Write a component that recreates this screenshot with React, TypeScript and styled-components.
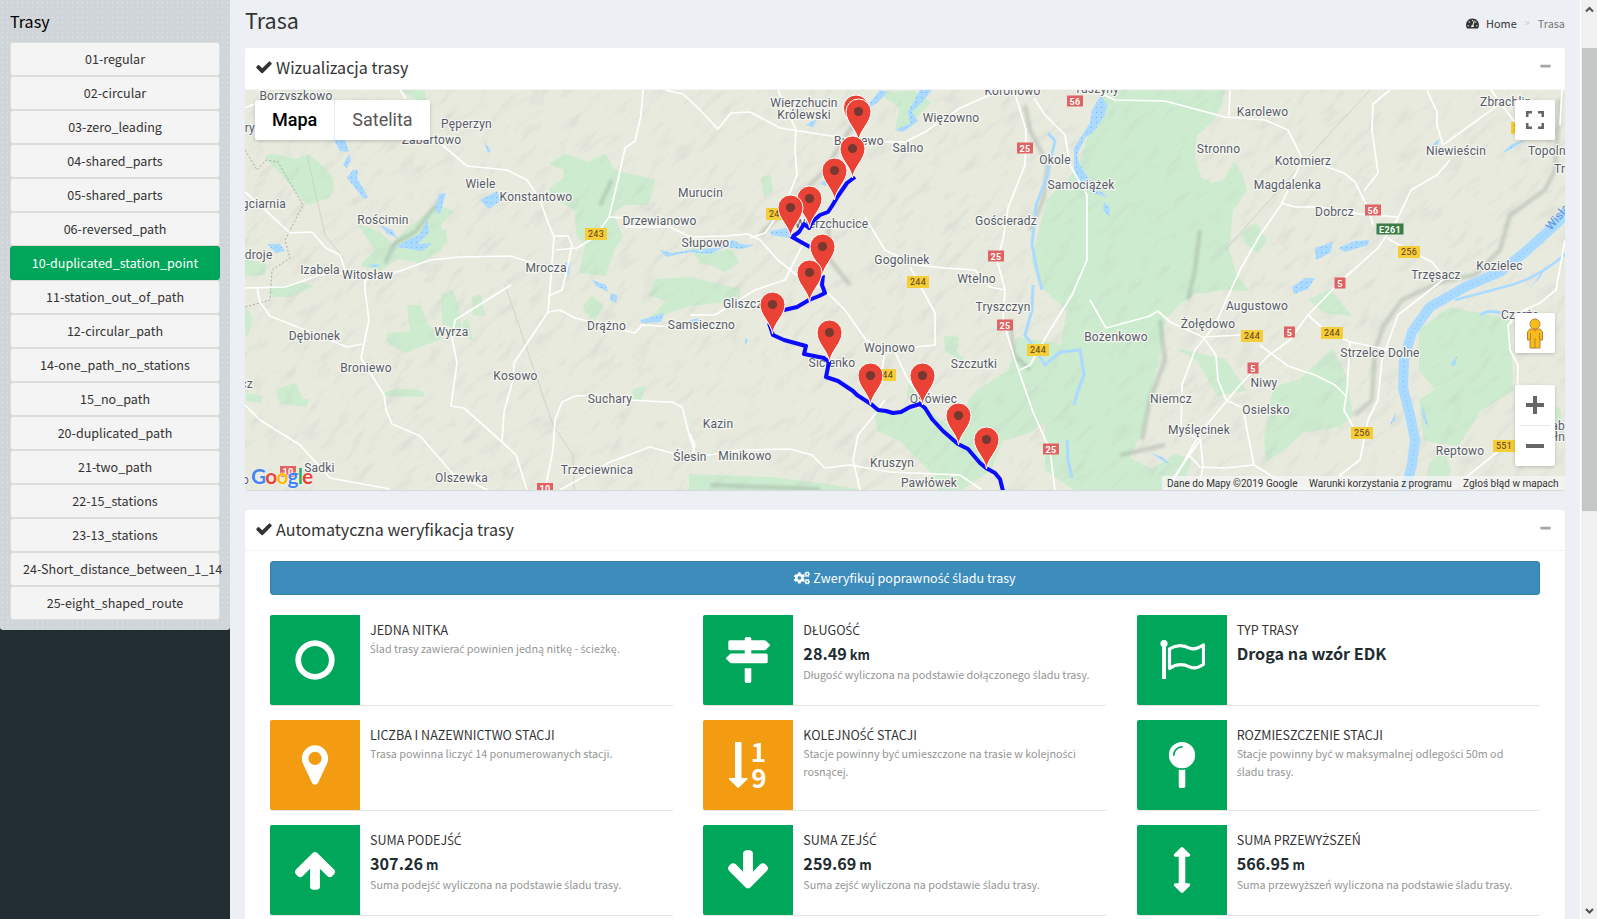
import React from 'react';
import styled, { createGlobalStyle } from 'styled-components';
import { FaCogs, FaTachometerAlt } from 'react-icons/fa';

const GlobalStyle = createGlobalStyle`
  * { box-sizing: border-box; }
  html, body { margin: 0; padding: 0; }
  body {
    overflow: hidden;
    background: #ecf0f4;
    color: #333;
    font-family: "Source Sans Pro", "Noto Sans CJK SC", "Open Sans", sans-serif;
    font-size: 12.55px;
    line-height: 20px;
  }
`;

const green = '#00a65a';
const orange = '#f39c12';

const Page = styled.div`
  display: flex;
  width: 1597px;
  height: 919px;
  overflow: hidden;
`;

const Sidebar = styled.aside`
  flex: 0 0 230px;
  width: 230px;
  min-width: 0;
  background: #222d32;
`;

const RoutePanel = styled.section`
  height: 630px;
  padding: 10px 10px 10px;
  border-radius: 0 0 3px 3px;
  background-color: #d0d5d9;
  background-image: radial-gradient(circle, #dfe9f0 0.6px, transparent 0.9px);
  background-size: 5px 5px;
`;

const PanelTitle = styled.h2`
  margin: 0;
  height: 32px;
  font-size: 16.1px;
  font-weight: 400;
  line-height: 22px;
  color: #000;
`;

const RouteList = styled.nav`
  display: grid;
  grid-template-columns: 210px;
`;

const RouteButton = styled.div<{ $active?: boolean }>`
  height: 34px;
  padding: 0 12px;
  border: 1px solid ${p => (p.$active ? '#04a059' : '#dddddb')};
  border-radius: 3px;
  background: ${p => (p.$active ? green : '#f4f4f4')};
  color: ${p => (p.$active ? '#fff' : '#333')};
  line-height: 31px;
  text-align: center;
  white-space: nowrap;
`;

const Content = styled.main`
  flex: 1 1 0;
  min-width: 0;
  padding: 0 15px;
`;

const ContentHeader = styled.header`
  display: flex;
  align-items: center;
  justify-content: space-between;
  height: 48px;
`;

const PageTitle = styled.h1`
  margin: 0;
  padding-bottom: 9px;
  font-size: 21.5px;
  font-weight: 400;
  line-height: 26px;
`;

const Breadcrumb = styled.div`
  display: flex;
  align-items: center;
  padding-bottom: 2px;
  font-size: 10.9px;
  line-height: 18px;
  color: #777;
`;

const HomeLink = styled.span`
  display: flex;
  align-items: center;
  gap: 7px;
  color: #333;
`;

const Separator = styled.span`
  padding: 0 8px;
  font-size: 9px;
  color: #c4c4c4;
`;

const Box = styled.section`
  margin-bottom: 20px;
  border-radius: 3px;
  background: #fff;
  box-shadow: 0 1px 1px rgba(0, 0, 0, 0.1);
`;

const BoxHeader = styled.header<{ $height: number }>`
  display: flex;
  align-items: center;
  height: ${p => p.$height}px;
  padding: 0 13px 3px 10px;
  border-bottom: 1px solid #f4f4f4;
`;

const BoxTitle = styled.h3`
  flex: 1;
  display: flex;
  align-items: center;
  gap: 3px;
  margin: 0;
  font-size: 16.1px;
  font-weight: 400;
  line-height: 18px;
`;

const Collapse = styled.span`
  display: flex;
  padding-bottom: 1px;
  color: #a3a6aa;
`;

const MapFrame = styled.div`
  position: relative;
  height: 400px;
  overflow: hidden;
  font-family: Roboto, sans-serif;
`;

const MapSvg = styled.svg`
  display: block;
  width: 1320px;
  height: 400px;
`;

const MapTypes = styled.div`
  position: absolute;
  top: 10px;
  left: 10px;
  display: flex;
  height: 40px;
  border-radius: 2px;
  background: #fff;
  box-shadow: 0 1px 4px -1px rgba(0, 0, 0, 0.3);
`;

const MapType = styled.span<{ $selected?: boolean }>`
  padding: 0 17px;
  border-left: ${p => (p.$selected ? '0' : '1px solid #e8e8e8')};
  font-size: 18px;
  line-height: 40px;
  font-weight: ${p => (p.$selected ? 500 : 400)};
  color: ${p => (p.$selected ? '#000' : '#565656')};
`;

const MapControl = styled.div<{ $top: number; $height: number }>`
  position: absolute;
  top: ${p => p.$top}px;
  right: 10px;
  display: flex;
  flex-direction: column;
  align-items: center;
  justify-content: center;
  width: 40px;
  height: ${p => p.$height}px;
  border-radius: 2px;
  background: #fff;
  box-shadow: 0 1px 4px -1px rgba(0, 0, 0, 0.3);
`;

const ZoomGlyphs = styled.div`
  display: flex;
  flex-direction: column;
  align-items: center;
  padding-bottom: 7px;
`;

const ZoomDivider = styled.div`
  width: 30px;
  height: 1px;
  margin: 11px 0 18px;
  background: #e6e6e6;
`;

const Credits = styled.div`
  position: absolute;
  right: 0;
  bottom: 0;
  display: flex;
  gap: 12px;
  height: 14px;
  padding: 0 6px 0 5px;
  background: rgba(245, 245, 245, 0.75);
  font-size: 10px;
  line-height: 15px;
  color: #333;
  white-space: nowrap;
`;

const Credit = styled.span<{ $width: number }>`
  width: ${p => p.$width}px;
`;

const Logo = styled.div`
  position: absolute;
  left: 6px;
  bottom: 1px;
  font-family: Lato, sans-serif;
  font-size: 21px;
  font-weight: 700;
  line-height: 26px;
  letter-spacing: -0.9px;
  text-shadow: 0 0 1px #fff, 0 0 2px #fff;
`;

const LogoLetter = styled.span<{ $color: string }>`
  color: ${p => p.$color};
`;

const BoxBody = styled.div`
  padding: 10px 25px 30px;
`;

const VerifyButton = styled.button`
  display: flex;
  align-items: center;
  justify-content: center;
  gap: 3px;
  width: 100%;
  height: 34px;
  margin: 0 0 20px;
  padding: 0;
  border: 1px solid #367fa9;
  border-radius: 3px;
  background: #3c8dbc;
  color: #fff;
  font: inherit;
`;

const InfoGrid = styled.div`
  display: grid;
  grid-template-columns: repeat(3, 1fr);
  gap: 15px 30px;
`;

const InfoCard = styled.article`
  display: flex;
  height: 90px;
  border-radius: 2px;
  background: #fff;
  box-shadow: 0 1px 0 #e5e6df;
`;

const InfoIcon = styled.div<{ $color: string }>`
  display: flex;
  flex: 0 0 90px;
  align-items: center;
  justify-content: center;
  border-radius: 2px 0 0 2px;
  background: ${p => p.$color};
  color: #fff;
`;

const InfoText = styled.div`
  flex: 1;
  min-width: 0;
  padding: 5px 10px 0;
`;

const InfoTitle = styled.div`
  height: 20px;
  line-height: 20px;
  text-transform: uppercase;
`;

const InfoNumber = styled.div`
  height: 26px;
  font-size: 16.2px;
  font-weight: 700;
  line-height: 26px;
  color: #222d32;
`;

const Unit = styled.small`
  font-size: 12.9px;
`;

const InfoNote = styled.div`
  font-size: 10.75px;
  line-height: 18px;
  color: #949694;
`;

const Accented = styled.span`
  font-family: "Open Sans", sans-serif;
  font-size: 0.98em;
  line-height: 1;
`;

const PolishText = ({ children }: { children: string }) => (
  <span>
    {children.split(/([śćżźŚĆŻŹ]+)/).map((part, i) => (i % 2 ? <Accented key={i}>{part}</Accented> : part))}
  </span>
);

const ScrollTrack = styled.div`
  display: flex;
  flex: 0 0 17px;
  flex-direction: column;
  align-items: center;
  border-left: 1px solid #fff;
  background: #eff0ef;
  color: #505050;
`;

const ScrollArrow = styled.svg`
  width: 9px;
  height: 18px;
`;

const ScrollThumb = styled.div`
  width: 15px;
  height: 463px;
  margin: 30px 0 390px;
  background: #c3c8c7;
`;

/* Glyphs on a 1792-unit square */
const glyphs: Record<string, string> = {
  check: 'M1671 566q0 40-28 68l-724 724-136 136q-28 28-68 28t-68-28l-136-136-362-362q-28-28-28-68t28-68l136-136q28-28 68-28t68 28l294 295 656-657q28-28 68-28t68 28l136 136q28 28 28 68z',
  minus: 'M1600 736v192q0 40-28 68t-68 28h-1216q-40 0-68-28t-28-68v-192q0-40 28-68t68-28h1216q40 0 68 28t28 68z',
  circle: 'M896 352q-148 0-273 73t-198 198-73 273 73 273 198 198 273 73 273-73 198-198 73-273-73-273-198-198-273-73zm768 544q0 209-103 385.500t-279.500 279.500-385.500 103-385.500-103-279.500-279.500-103-385.500 103-385.500 279.500-279.500 385.500-103 385.500 103 279.500 279.500 103 385.500z',
  marker: 'M1152 640q0-106-75-181t-181-75-181 75-75 181 75 181 181 75 181-75 75-181zm256 0q0 109-33 179l-364 774q-16 33-47.500 52t-67.500 19-67.500-19-46.500-52l-365-774q-33-70-33-179 0-212 150-362t362-150 362 150 150 362z',
  signs: 'M1745 297q10 10 10 23t-10 23l-141 141q-28 28-68 28h-1344q-26 0-45-19t-19-45v-256q0-26 19-45t45-19h576v-64q0-26 19-45t45-19h128q26 0 45 19t19 45v64h512q40 0 68 28zm-977 919h256v512q0 26-19 45t-45 19h-128q-26 0-45-19t-19-45v-512zm832-576q26 0 45 19t19 45v256q0 26-19 45t-45 19h-1344q-40 0-68-28l-141-141q-10-10-10-23t10-23l141-141q28-28 68-28h512v-192h256v192h576z',
  pin: 'M896 1088q66 0 128-15v655q0 26-19 45t-45 19h-128q-26 0-45-19t-19-45v-655q62 15 128 15zm0-1088q212 0 362 150t150 362-150 362-362 150-362-150-150-362 150-362 362-150zm0 224q14 0 23-9t9-23-9-23-23-9q-146 0-249 103t-103 249q0 14 9 23t23 9 23-9 9-23q0-119 84.500-203.500t203.500-84.500z',
  up: 'M1675 971q0 51-37 90l-75 75q-38 38-91 38-54 0-90-38l-294-293v704q0 52-37.500 84.500t-90.500 32.500h-128q-53 0-90.500-32.500t-37.500-84.500v-704l-294 293q-36 38-90 38t-90-38l-75-75q-38-38-38-90 0-53 38-91l651-651q35-37 90-37 54 0 91 37l651 651q37 39 37 91z',
  down: 'M1675 832q0 53-37 90l-651 652q-39 37-91 37-53 0-90-37l-651-652q-38-36-38-90 0-53 38-91l74-75q39-37 91-37 53 0 90 37l294 294v-704q0-52 38-90t90-38h128q52 0 90 38t38 90v704l294-294q37-37 90-37 52 0 91 37l75 75q37 39 37 91z',
  vertical: 'M1216 320q0 26-19 45t-45 19h-128v1024h128q26 0 45 19t19 45-19 45l-256 256q-19 19-45 19t-45-19l-256-256q-19-19-19-45t19-45 45-19h128v-1024h-128q-26 0-45-19t-19-45 19-45l256-256q19-19 45-19t45 19l256 256q19 19 19 45z',
};

const Glyph = ({ name, size }: { name: string; size: number }) => (
  <svg width={size} height={size} viewBox="0 0 1792 1792" fill="currentColor">
    <path d={glyphs[name]} />
  </svg>
);

const FlagGlyph = () => (
  <svg width="46" height="46" viewBox="0 0 46 46" fill="none" stroke="#fff">
    <circle cx="5" cy="6.500" r="3.600" fill="#fff" stroke="none" />
    <path d="M5 8v34" strokeWidth="4" />
    <path d="M10.500 11.800c7-4.400 13-4.600 20.500-.5 4.500 2 9-.8 13.500-3.300v19.500c-5 3-9 4.800-14 2.400-7-3.500-13-3-20 1.400z" strokeWidth="3.200" strokeLinejoin="round" />
  </svg>
);

const SortGlyph = () => (
  <svg width="45" height="52" viewBox="0 0 45 52" fill="#fff">
    <path d="M9 3h6.500v36h5.500q1.500 0 .5 1.300L13 48.500q-.8.800-1.600 0L3 40.300Q2 39 3.500 39H9z" />
    <text x="32.500" y="22.500" textAnchor="middle" fontSize="26" fontWeight="700" fontFamily='"Noto Sans CJK SC", sans-serif'>1</text>
    <text x="33" y="48.500" textAnchor="middle" fontSize="26" fontWeight="700" fontFamily='"Noto Sans CJK SC", sans-serif'>9</text>
  </svg>
);

const routes = [
  '01-regular', '02-circular', '03-zero_leading', '04-shared_parts', '05-shared_parts',
  '06-reversed_path', '10-duplicated_station_point', '11-station_out_of_path',
  '12-circular_path', '14-one_path_no_stations', '15_no_path', '20-duplicated_path',
  '21-two_path', '22-15_stations', '23-13_stations', '24-Short_distance_between_1_14',
  '25-eight_shaped_route',
];

type Check = { title: string; color: string; icon: React.ReactNode; value?: string; unit?: string; note?: string };

const checks: Check[] = [
  { title: 'Jedna nitka', color: green, icon: <Glyph name="circle" size={46} />, note: 'Ślad trasy zawierać powinien jedną nitkę - ścieżkę.' },
  { title: 'Długość', color: green, icon: <Glyph name="signs" size={46} />, value: '28.49', unit: 'km', note: 'Długość wyliczona na podstawie dołączonego śladu trasy.' },
  { title: 'Typ trasy', color: green, icon: <FlagGlyph />, value: 'Droga na wzór EDK' },
  { title: 'Liczba i nazewnictwo stacji', color: orange, icon: <Glyph name="marker" size={46} />, note: 'Trasa powinna liczyć 14 ponumerowanych stacji.' },
  { title: 'Kolejność stacji', color: orange, icon: <SortGlyph />, note: 'Stacje powinny być umieszczone na trasie w kolejności rosnącej.' },
  { title: 'Rozmieszczenie stacji', color: green, icon: <Glyph name="pin" size={46} />, note: 'Stacje powinny być w maksymalnej odlegości 50m od śladu trasy.' },
  { title: 'Suma podejść', color: green, icon: <Glyph name="up" size={46} />, value: '307.26', unit: 'm', note: 'Suma podejść wyliczona na podstawie śladu trasy.' },
  { title: 'Suma zejść', color: green, icon: <Glyph name="down" size={46} />, value: '259.69', unit: 'm', note: 'Suma zejść wyliczona na podstawie śladu trasy.' },
  { title: 'Suma przewyższeń', color: green, icon: <Glyph name="vertical" size={46} />, value: '566.95', unit: 'm', note: 'Suma przewyższeń wyliczona na podstawie śladu trasy.' },
];

type Place = [string, number, number, ('start' | 'end')?];

const places: Place[] = [
  ['Borzyszkowo', 296, 100], ['ary', 255, 132, 'end'], ['Pęperzyn', 466.5, 128], ['Zabartowo', 431.5, 144],
  ['Wiele', 480.5, 188], ['Konstantowo', 536, 201], ['Rościmin', 383, 224], ['gciarnia', 286, 208, 'end'],
  ['Zdroje', 272.5, 259, 'end'], ['Izabela', 320, 274], ['Witosław', 367.5, 279], ['Mrocza', 546, 272],
  ['Drzewianowo', 659.5, 225], ['Murucin', 700.5, 197], ['Słupowo', 705.5, 247], ['Dębionek', 314.5, 340],
  ['Broniewo', 366, 372], ['Wyrza', 451.5, 336], ['Kosowo', 515.5, 380], ['Drążno', 606.5, 330],
  ['Suchary', 610, 403], ['Trzeciewnica', 597, 474], ['Olszewka', 461.5, 482], ['Sadki', 319.5, 472],
  ['cz', 253, 388, 'end'], ['o', 249, 484, 'end'], ['Samsieczno', 701.5, 329], ['Ślesin', 690, 461],
  ['Kazin', 718, 428], ['Minikowo', 745, 460], ['Kruszyn', 892, 467], ['Pawłówek', 929, 487],
  ['Gliszcz', 723, 308, 'start'], ['Sicienko', 832, 367], ['Wojnowo', 889.5, 352], ['Szczutki', 974, 368],
  ['Tryszczyn', 1003, 311], ['Osówiec', 933.5, 403], ['Wierzchucin', 804, 107], ['Królewski', 804, 119],
  ['Buszewo', 859, 145], ['Salno', 908, 152], ['Więzowno', 951, 122], ['Koronowo', 1012.5, 94.5],
  ['Okole', 1055, 164], ['Samociążek', 1081, 189], ['Gościeradz', 1006, 225], ['Wierzchucice', 831.5, 228],
  ['Gogolinek', 902, 264], ['Wtelno', 976.5, 283], ['Bożenkowo', 1116, 341], ['Karolewo', 1262.5, 116],
  ['Stronno', 1218.5, 153], ['Kotomierz', 1303, 165], ['Magdalenka', 1287.5, 189], ['Dobrcz', 1334.5, 216],
  ['Zbrachlin', 1480, 106, 'start'], ['Niewieścin', 1456, 155], ['Topolno', 1528, 155, 'start'],
  ['Tr', 1554, 173, 'start'], ['Kozielec', 1499.5, 270], ['Trzęsacz', 1436, 279], ['Tuszyny', 1119, 92.5, 'end'],
  ['Augustowo', 1257, 310], ['Żołędowo', 1208, 328], ['Niwy', 1264, 387], ['Niemcz', 1171, 403],
  ['Osielsko', 1266, 414], ['Myślęcinek', 1199, 434], ['Strzelce Dolne', 1380, 357], ['Reptowo', 1460, 455],
  ['Czarże', 1501, 319, 'start'], ['ąb', 1565, 430, 'end'], ['ełn', 1565, 441, 'end'],
];

const yellow = '#f5cd37';
const red = '#e06262';

const shields: [string, number, number, string][] = [
  ['243', 596, 234, yellow], ['244', 777, 214, yellow], ['244', 918, 282, yellow], ['244', 885, 375, yellow],
  ['244', 1038, 350, yellow], ['244', 1252, 336, yellow], ['244', 1332, 333, yellow], ['256', 1409, 252, yellow],
  ['256', 1362, 433, yellow], ['551', 1504, 446, yellow], ['256', 1522, 128, yellow],
  ['56', 1075, 101.5, red], ['25', 1025, 148.5, red], ['25', 996, 256.5, red], ['25', 1005, 325.5, red],
  ['25', 1051, 449.5, red], ['56', 1373, 210.5, red], ['5', 1340, 283.5, red], ['5', 1289.5, 332.5, red],
  ['5', 1253, 368.5, red], ['10', 545, 489, red], ['10', 288, 472, red], ['E261', 1390, 229.5, '#3b7d45'],
];

const pins: [number, number][] = [
  [856, 107.5], [858.5, 111.5], [852.5, 148.5], [834.5, 170.5], [809.5, 198.5], [790.5, 207.5], [822.5, 246.5],
  [809.5, 272.5], [772.5, 304.5], [829.5, 332.5], [870.5, 375.5], [922.5, 375.5], [958.5, 415.5], [986.5, 439.5],
];

const forests = [
  'M1103 90L1224 90 1221 105 1213 120 1196 135 1194 155 1200 178 1212 184 1224 181 1234 163 1241 174 1246 190 1232 210 1228 250 1236 276 1247 290 1225 289 1195 293 1180 303 1165 318 1160 350 1150 392 1142 430 1128 458 1152 470 1175 455 1190 460 1182 490 1076 490 1046 470 1046 420 1030 432 1002 440 990 470 960 490 940 490 930 470 900 440 878 430 875 411 895 415 925 408 945 425 962 412 976 392 1010 370 1018 338 1062 345 1068 310 1040 285 1032 260 1048 200 1078 170z',
  'M404 90L424 90 425 101 411 96z',
  'M266 157Q270 153 279 156L295 160 309 155 323 168Q338 180 330 196L309 204 300 196 286 178z',
  'M551 163L566 155 588 163 605 155 614 171 654 180 648 204 625 204 612 213 622 237 613 250 605 275 580 272 586 245 577 235 576 210 550 195 551 188 565 178 564 169z',
  'M359 225L378 232 393 245 400 236 425 215 435 206 452 211 440 225 446 240 440 250 420 262 398 258 380 270 362 265 376 250z',
  'M420 235L445 230 447 242 424 252z M245 260L265 264 264 274 245 275z M270 290L300 283 312 286 290 296 273 296z',
  'M442 295L452 292 458 306 460 328 443 324z M473 297L480 296 484 315 474 314z M408 306L420 306 427 325 443 337 405 352 387 341 388 334 411 332z M467 320L472 340 468 338 463 324z',
  'M584 305L592 297 603 306 595 319 586 312z M384 394Q400 386 423 393L423 396 387 395z M277 390L295 384 302 400 308 400 306 406 280 402z M247 394L262 397 260 402 247 400z',
  'M634 390L645 387 640 400 632 399z M245 308L252 318 247 335z',
  'M656 280L690 278 740 290 737 300 690 305 660 315 645 325 668 300 650 295z M707 255L730 250 738 262 725 271 708 262z',
  'M687 240L703 244 715 258 730 268 700 262z M762 178L770 176 772 190 765 196z M690 282L713 284 713 292 690 302z',
  'M880 93L915 92 930 103 902 130 896 128 901 108 890 100z M945 337L958 338 956 350 946 350z M910 375L920 400 908 398z',
  'M1274 388L1300 380 1332 350 1345 375 1352 415 1340 426 1304 431 1280 452 1267 460 1265 440z',
  'M1420 330L1450 308 1510 320 1512 390 1480 410 1458 445 1425 440 1420 400 1436 390 1420 370z M1525 390L1560 410 1560 430 1530 420z',
  'M1310 300L1330 290 1350 315 1325 312z M1243 233L1256 224 1266 240 1258 252 1248 245z M1180 350L1225 360 1245 390 1218 395 1198 360z',
  'M1430 465L1443 450 1450 470 1440 490 1425 490z',
  'M690 475L770 478 820 484 860 490 690 490z M950 345L965 362 948 352z',
];

const waters = [
  'M334 140L345 140 349 152 340 151z M349 154L351 160 347 168 343 165z M353 170L358 170 357 178 368 197 364 199 347 178z',
  'M480 200L497 191 501 200 489 209z M484 141L491 151 488 153z M439 194L446 193 440 214 435 211z',
  'M380 225L392 230 397 238 388 234z M368 265L382 264 400 244 420 234 427 220 429 232 418 244 433 243 422 251 398 247 384 262 375 268z',
  'M267 244L280 244 285 251 276 253z M565 263L570 262 569 275 564 270z M592 280L606 285 608 292 596 286z M611 293L617 295 616 303 610 300z',
  'M660 250L672 253 690 250 713 248 733 240 740 244 755 245 742 249 725 247 710 254 690 252 666 257z M770 231L792 227 790 238 771 235z',
  'M640 320L655 316 664 313 661 322 642 323z M690 320L699 318 698 325 690 324z M745 338L748 340 745 345z',
  'M880 90L887 92 878 102 862 113 872 100z M805 125L817 119 813 127z M920 90L932 90 924 100 912 112 918 121 903 132 895 130 910 124 908 112z M820 184L834 173 826 186z',
  'M1101 95L1107 105 1105 115 1095 130 1085 138 1077 155 1080 165 1088 178 1098 190 1108 197 1095 194 1080 183 1074 170 1074 148 1090 123 1092 110z',
  'M1315 248L1333 242 1330 253 1316 260z M1338 248L1355 241 1369 240 1368 245 1345 252z M1292 287L1305 278 1315 278 1308 289 1294 294z',
  'M1430 146L1440 139 1437 146z M1502 153L1512 144 1525 140 1510 150z M1104 202L1110 207 1109 217 1103 210z M1450 365L1457 356 1455 366z',
  'M1390 425L1396 411 1395 420z M1422 403L1428 425 1430 430 1423 418z M1540 278L1548 262 1534 283 1528 290z M1152 453L1164 458 1170 465 1160 459z',
];

const rivers = [
  'M1048 133L1055 141 1046 180 1036 205 1032 245 1037 270 1042 290',
  'M1033 285L1032 310 1025 335 1036 350 1045 365 1060 352 1080 350 1084 375 1078 390 1074 405',
  'M1480 315Q1488 309 1502 313',
  'M1067 440L1068 460 1072 478',
];

const roads = [
  'M400 90L406 99 M245 108L254 104 M253 105L290 93',
  'M440 143L467 166 507 170 527 180 540 200 547 220 554 237 553 250 550 290 548 312 514 363 513 380 504 412 502 442',
  'M643 90L641 115 635 141 625 148 618 180 609 217 595 237 577 248 556 250 M554 236L568 236 572 245 568 265 562 290 548 296',
  'M609 217L625 218 M625 227L670 227 690 237 725 236 748 234 760 240 778 260 800 278 825 290 845 310 866 340 885 350 882 370',
  'M665 90L683 94 700 110 718 129 731 113 750 112 780 128 838 137 863 142 905 142 925 132 960 108 992 94 1030 90',
  'M778 90L796 130 795 150 797 175 785 205 765 233 750 238',
  'M805 240L785 280 755 290 715 315 690 315 M245 192L263 208 290 233 312 232 326 248 340 255 345 270 365 280 400 271 430 260 460 257 510 256 530 262 544 270',
  'M245 288L285 287 320 275 350 272 M365 270L365 290 369 320 361 358 384 395 386 410 392 424 420 436 453 474 488 490',
  'M257 288L260 302 270 316 305 330 347 347 362 344 M511 285L455 320 452 338 457 363 451 406 464 408 502 442 516 455 527 490',
  'M548 312L560 310 575 318 600 324 635 333 642 325 675 327',
  'M245 405L260 420 300 445 330 478 390 489 M545 490L553 450 555 420 562 402 575 396 595 395 630 400 665 402 672 402 682 407 690 438 695 452 690 458 650 447 610 462 560 490',
  'M690 434L695 445 691 458 740 450 790 449 812 455 825 468 850 465 890 472 960 475 982 490 M860 490L853 460 858 435 872 418 885 400',
  'M1014 90L1026 130 1025 165 1008 208 1003 240 997 260 1005 290 1003 320 1015 360 1033 412 1050 450 1055 490',
  'M1034 98L1045 115 1065 135 1070 165 1087 195 1087 260 1072 295 1050 330 1030 365 1020 370',
  'M865 217L885 250 915 265 945 268 975 270 990 287 1005 290 M910 267L935 313 935 345 915 347 M895 352L907 378 922 400',
  'M1100 93L1115 100 1165 101 1225 117 1265 120 1288 130 1302 158 1344 173 1355 182 1369 210 1373 225 M1230 90L1229 116',
  'M1302 160L1281 205 1260 235 1240 270 1215 325 1195 350 1182 385 1181 430 1200 440 1165 490',
  'M1281 203L1295 207 1320 207 1360 214 1398 217 M1450 160L1437 175 1411 190 1397 220 1378 248 1340 282 1308 315 1290 340 1268 356 1240 385 1200 433 1175 478 1165 490',
  'M1390 90L1373 104 1372 130 1378 173 1364 191 M1427 90L1437 112 1437 125 1443 145 1505 100 M1491 90L1513 120 1533 137 M1562 90L1560 125',
  'M1387 238L1408 250 1432 262 1445 278 1420 298 1398 315 1382 360 1378 400 1368 420 1360 460 M1360 460L1340 475 1358 490',
  'M1308 315L1325 330 1350 342 1390 350 M1350 342L1347 390 1344 410 1355 430 M1260 345L1288 366 1315 375 1335 385 1346 396',
  'M1188 454L1200 467 1225 468 1254 465 1275 478 1310 490 M1203 337L1216 355 1218 380 1226 400 1243 408 1248 435 1254 465 M1090 300L1106 328 1150 316 1158 311 1170 322 1203 337 1240 335',
  'M1200 435L1203 467 1198 490 M1565 240L1556 290 1540 303 1520 312 1508 325 1510 350 1518 365 1517 400 M1465 478L1500 450',
];

const ridges = [
  'M1560 100L1555 170 1545 190 1510 215 1500 250 1475 275 1440 282 1402 300 1384 325 1375 350 1372 400 1355 415',
  'M1160 320L1165 360 1150 400 1142 440 M1120 455L1165 445 M1200 230L1195 270 1188 300',
  'M860 115L840 145 825 170 760 235 M828 220L830 260 850 285',
  'M1025 105L1030 130 1048 165 1043 200 1030 230 M1010 320L1014 355 1030 370',
  'M385 263L395 243 415 232 440 200 M612 180L600 205 M710 485L820 489',
];

const minorRoads = [
  'M1370 90L1310 155 1225 250', 'M505 285L553 425 573 455 574 490', 'M307 155L325 235 345 260',
];

const MapPicture = () => (
  <MapSvg viewBox="245 90 1320 400">
    <defs>
      <filter id="relief" x="0" y="0" width="100%" height="100%">
        <feTurbulence type="fractalNoise" baseFrequency="0.035 0.120" numOctaves={4} seed={7} />
        <feColorMatrix values="0 0 0 0 0.48  0 0 0 0 0.52  0 0 0 0 0.49  2.200 0 0 0 -1.150" />
      </filter>
      <filter id="soft"><feGaussianBlur stdDeviation="1.500" /></filter>
      <pattern id="waves" width="5" height="5" patternUnits="userSpaceOnUse">
        <rect width="5" height="5" fill="#aadaff" />
        <rect x="1" y="2" width="1" height="1" fill="#72b1fa" />
      </pattern>
    </defs>
    <rect x="245" y="90" width="1320" height="400" fill="#e8eade" />
    {forests.map((d, i) => <path key={i} d={d} fill="#cdeccf" stroke="#cdeccf" strokeWidth="2" strokeLinejoin="round" />)}
    <g transform="rotate(-45 905 290)">
      <rect x="200" y="-350" width="1420" height="1280" filter="url(#relief)" opacity="0.32" />
    </g>
    <g fill="none" stroke="#9aa79c" strokeWidth="4" opacity="0.45" filter="url(#soft)">
      {ridges.map((d, i) => <path key={i} d={d} />)}
    </g>
    <g fill="url(#waves)">{waters.map((d, i) => <path key={i} d={d} />)}</g>
    <g fill="none" stroke="#aadaff" strokeWidth="3">{rivers.map((d, i) => <path key={i} d={d} />)}</g>
    <path d="M1575 205L1556 224 1525 252 1500 272 1465 287 1430 307 1412 332 1404 360 1403 388 1410 415 1415 440 1412 465 1404 495" fill="none" stroke="#aadaff" strokeWidth="10" strokeLinejoin="round" />
    <path d="M1575 205L1556 224 1525 252 1500 272 1465 287 1430 307 1412 332 1404 360 1403 388 1410 415 1415 440 1412 465 1404 495" fill="none" stroke="#79b5fa" strokeWidth="1" strokeDasharray="1 4" />
    <path d="M1575 245Q1540 280 1500 288L1455 300" fill="none" stroke="#aadaff" strokeWidth="2.500" />
    <g fill="none" stroke="#d0d2cb" strokeWidth="1">{minorRoads.map((d, i) => <path key={i} d={d} />)}</g>
    <path d="M245 150L257 170 266 160 278 162 303 205 285 240 290 258 272 270 270 300 245 307" fill="none" stroke="#a8aaa5" strokeWidth="1" strokeDasharray="2 2" />
    <g fill="none" stroke="#fff" strokeWidth="1.700" strokeLinejoin="round">{roads.map((d, i) => <path key={i} d={d} />)}</g>
    {shields.map(([label, x, y, fill], i) => {
      const w = label.length === 4 ? 27 : label.length === 3 ? 22 : label.length === 2 ? 16 : 11;
      return (
        <g key={i}>
          <rect x={x - w / 2} y={y - 6} width={w} height={fill === yellow ? 12 : 11} fill={fill} />
          <text x={x} y={y + 3} textAnchor="middle" fontSize="9" letterSpacing="0.300" fontWeight={fill === yellow ? 400 : 700} fill={fill === yellow ? '#5b3b20' : '#fff'}>{label}</text>
        </g>
      );
    })}
    <g fontSize="12" letterSpacing="0.200" fill="#565b68" stroke="#f6f7f2" strokeWidth="2.400" strokeLinejoin="round" paintOrder="stroke">
      {places.map(([label, x, y, anchor], i) => (
        <text key={i} x={x} y={y} textAnchor={anchor || 'middle'}>{label}</text>
      ))}
    </g>
    <text x="1551" y="231" fontSize="12" fill="#5b93e4" transform="rotate(-50 1551 231)">Wisła</text>
    <path d="M855 177L847 183 838 196 832 206 828 212 820 215 812 222 809 228 804 224 799 232 792 237 810 247 M823 275L822 285 825 293 819 296 809 300 797 307 784 310 M769 323L773 335 784 340 806 346 804 354 824 358 829 362 826 377 838 381 853 391 857 395 871 404 878 410 886 411 893 413 901 412 910 407 920 404 925 408 932 419 943 431 958 444 968 449 980 463 986 468 995 473 1000 479 1003 491" fill="none" stroke="#0b0bff" strokeWidth="4" strokeLinejoin="round" />
    {pins.map(([x, y], i) => (
      <g key={i} transform={`translate(${x} ${y})`}>
        <path d="M0 29.500C-1.500 18-12.500 11-12.500 0A12.500 12.500 0 0 1 12.500 0C12.500 11 1.500 18 0 29.500z" fill="#ea4335" stroke="#fff" strokeWidth="1" />
        <circle r="4.600" fill="#77382f" />
      </g>
    ))}
  </MapSvg>
);

const logo: [string, string][] = [
  ['G', '#4285f4'], ['o', '#ea4335'], ['o', '#fbbc05'], ['g', '#4285f4'], ['l', '#34a853'], ['e', '#ea4335'],
];

export default function App() {
  return (
    <>
      <GlobalStyle />
      <Page>
        <Sidebar>
          <RoutePanel>
            <PanelTitle>Trasy</PanelTitle>
            <RouteList>
              {routes.map(name => (
                <RouteButton key={name} role="button" $active={name.startsWith('10-')}>{name}</RouteButton>
              ))}
            </RouteList>
          </RoutePanel>
        </Sidebar>
        <Content>
          <ContentHeader>
            <PageTitle>Trasa</PageTitle>
            <Breadcrumb>
              <HomeLink><FaTachometerAlt size={13} />Home</HomeLink>
              <Separator>&gt;</Separator>
              Trasa
            </Breadcrumb>
          </ContentHeader>
          <Box>
            <BoxHeader $height={42}>
              <BoxTitle><Glyph name="check" size={18} />Wizualizacja trasy</BoxTitle>
              <Collapse><Glyph name="minus" size={13} /></Collapse>
            </BoxHeader>
            <MapFrame>
              <MapPicture />
              <MapTypes>
                <MapType $selected>Mapa</MapType>
                <MapType>Satelita</MapType>
              </MapTypes>
              <MapControl $top={10} $height={40}>
                <svg width="18" height="18" viewBox="0 0 18 18" fill="none" stroke="#666" strokeWidth="2.500">
                  <path d="M1.250 6V1.250H6M12 1.250h4.750V6M16.750 12v4.750H12M6 16.750H1.250V12" />
                </svg>
              </MapControl>
              <MapControl $top={223} $height={40}>
                <svg width="18" height="31" viewBox="0 0 18 31" fill="#f9bd1a" stroke="#b5813c" strokeWidth="1">
                  <path d="M4 11h10l2.500 3v8H14v8H4v-8H1.500v-8z" />
                  <path d="M9 20v10M4.500 15v7M13.500 15v7" />
                  <circle cx="9" cy="6" r="5" />
                  <path d="M6.500 11L9 14l2.500-3z" fill="#e9852d" stroke="none" />
                </svg>
              </MapControl>
              <MapControl $top={295} $height={81}>
                <ZoomGlyphs>
                  <svg width="18" height="18" viewBox="0 0 18 18" stroke="#666" strokeWidth="4"><path d="M0 9h18M9 0v18" /></svg>
                  <ZoomDivider />
                  <svg width="18" height="4" viewBox="0 0 18 4"><rect width="18" height="4" fill="#666" /></svg>
                </ZoomGlyphs>
              </MapControl>
              <Logo>{logo.map(([letter, color], i) => <LogoLetter key={i} $color={color}>{letter}</LogoLetter>)}</Logo>
              <Credits>
                <Credit $width={130}>Dane do Mapy ©2019 Google</Credit>
                <Credit $width={142}>Warunki korzystania z programu</Credit>
                <Credit $width={96}>Zgłoś błąd w mapach</Credit>
              </Credits>
            </MapFrame>
          </Box>
          <Box>
            <BoxHeader $height={41}>
              <BoxTitle><Glyph name="check" size={18} />Automatyczna weryfikacja trasy</BoxTitle>
              <Collapse><Glyph name="minus" size={13} /></Collapse>
            </BoxHeader>
            <BoxBody>
              <VerifyButton><FaCogs size={16} /><PolishText>Zweryfikuj poprawność śladu trasy</PolishText></VerifyButton>
              <InfoGrid>
                {checks.map(c => (
                  <InfoCard key={c.title}>
                    <InfoIcon $color={c.color}>{c.icon}</InfoIcon>
                    <InfoText>
                      <InfoTitle><PolishText>{c.title}</PolishText></InfoTitle>
                      {c.value && <InfoNumber>{c.value}{c.unit && <Unit> {c.unit}</Unit>}</InfoNumber>}
                      {c.note && <InfoNote><PolishText>{c.note}</PolishText></InfoNote>}
                    </InfoText>
                  </InfoCard>
                ))}
              </InfoGrid>
            </BoxBody>
          </Box>
        </Content>
        <ScrollTrack>
          <ScrollArrow viewBox="0 0 9 18" fill="none" stroke="currentColor" strokeWidth="2"><path d="M1 11.500L4.500 8 8 11.500" /></ScrollArrow>
          <ScrollThumb />
          <ScrollArrow viewBox="0 0 9 18" fill="none" stroke="currentColor" strokeWidth="2"><path d="M1 8L4.500 11.500 8 8" /></ScrollArrow>
        </ScrollTrack>
      </Page>
    </>
  );
}
